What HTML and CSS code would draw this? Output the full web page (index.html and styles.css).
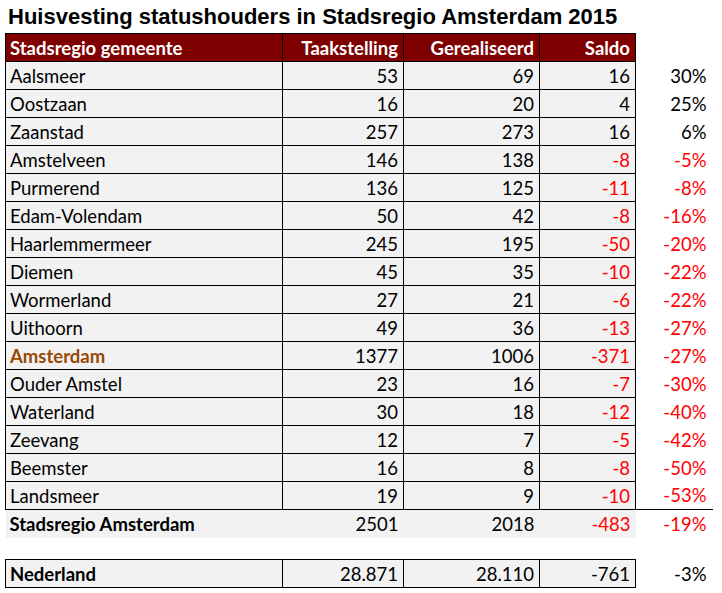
FILE: index.html
```html
<!DOCTYPE html>
<html>
<head>
<meta charset="utf-8">
<link rel="stylesheet" href="styles.css">
</head>
<body>
<h1 class="title">Huisvesting statushouders in Stadsregio Amsterdam 2015</h1>
<table class="data">
  <colgroup>
    <col class="c-name"><col class="c-taak"><col class="c-ger"><col class="c-saldo"><col class="c-pct">
  </colgroup>
  <thead>
    <tr class="head">
      <th class="name">Stadsregio gemeente</th>
      <th>Taakstelling</th>
      <th>Gerealiseerd</th>
      <th>Saldo</th>
      <th class="pct"></th>
    </tr>
  </thead>
  <tbody>
    <tr><td class="name">Aalsmeer</td><td>53</td><td>69</td><td>16</td><td class="pct">30%</td></tr>
    <tr><td class="name">Oostzaan</td><td>16</td><td>20</td><td>4</td><td class="pct">25%</td></tr>
    <tr><td class="name">Zaanstad</td><td>257</td><td>273</td><td>16</td><td class="pct">6%</td></tr>
    <tr><td class="name">Amstelveen</td><td>146</td><td>138</td><td class="neg">-8</td><td class="pct neg">-5%</td></tr>
    <tr><td class="name">Purmerend</td><td>136</td><td>125</td><td class="neg">-11</td><td class="pct neg">-8%</td></tr>
    <tr><td class="name">Edam-Volendam</td><td>50</td><td>42</td><td class="neg">-8</td><td class="pct neg">-16%</td></tr>
    <tr><td class="name">Haarlemmermeer</td><td>245</td><td>195</td><td class="neg">-50</td><td class="pct neg">-20%</td></tr>
    <tr><td class="name">Diemen</td><td>45</td><td>35</td><td class="neg">-10</td><td class="pct neg">-22%</td></tr>
    <tr><td class="name">Wormerland</td><td>27</td><td>21</td><td class="neg">-6</td><td class="pct neg">-22%</td></tr>
    <tr><td class="name">Uithoorn</td><td>49</td><td>36</td><td class="neg">-13</td><td class="pct neg">-27%</td></tr>
    <tr><td class="name ams">Amsterdam</td><td>1377</td><td>1006</td><td class="neg">-371</td><td class="pct neg">-27%</td></tr>
    <tr><td class="name">Ouder Amstel</td><td>23</td><td>16</td><td class="neg">-7</td><td class="pct neg">-30%</td></tr>
    <tr><td class="name">Waterland</td><td>30</td><td>18</td><td class="neg">-12</td><td class="pct neg">-40%</td></tr>
    <tr><td class="name">Zeevang</td><td>12</td><td>7</td><td class="neg">-5</td><td class="pct neg">-42%</td></tr>
    <tr><td class="name">Beemster</td><td>16</td><td>8</td><td class="neg">-8</td><td class="pct neg">-50%</td></tr>
    <tr><td class="name">Landsmeer</td><td>19</td><td>9</td><td class="neg">-10</td><td class="pct neg">-53%</td></tr>
    <tr class="total"><td class="name">Stadsregio Amsterdam</td><td>2501</td><td>2018</td><td class="neg">-483</td><td class="pct neg">-19%</td></tr>
    <tr class="gap"><td colspan="5"></td></tr>
    <tr class="nl"><td class="name">Nederland</td><td>28.871</td><td>28.110</td><td>-761</td><td class="pct">-3%</td></tr>
  </tbody>
</table>
</body>
</html>
```

FILE: styles.css
```css
html, body {
  margin: 0;
  padding: 0;
  background: #ffffff;
}
body {
  padding: 0 0 0 5px;
}
.title {
  font-family: "Liberation Sans", Arial, sans-serif;
  font-weight: bold;
  font-size: 22px;
  line-height: 24px;
  margin: 0;
  padding: 5px 0 4px 3px;
  color: #000;
}
.data {
  border-collapse: collapse;
  table-layout: fixed;
  width: 707px;
  font-family: Lato, "Open Sans", sans-serif;
  font-size: 18.5px;
  color: #000;
}
.c-name { width: 277px; }
.c-taak { width: 121px; }
.c-ger { width: 136px; }
.c-saldo { width: 96px; }
.c-pct { width: 77px; }
.data th, .data td {
  height: 28px;
  padding: 0 5px 0 4px;
  text-align: right;
  white-space: nowrap;
  border: 1px solid #000;
  background: #f2f2f2;
  box-sizing: border-box;
  line-height: 22px;
  vertical-align: middle;
}
.data th.name, .data td.name {
  text-align: left;
}
.data .head th {
  background: #7f0000;
  color: #ffffff;
  font-weight: bold;
}
.data td.pct, .data th.pct {
  background: #ffffff;
  border: none;
  padding-right: 6px;
}
.data .head th.pct {
  background: #ffffff;
}
.neg {
  color: #ff0000;
}
.ams {
  color: #984807;
  font-weight: bold;
}
.data .total td {
  border-left: none;
  border-right: none;
  border-bottom: none;
  border-top: 1px solid #000;
  font-weight: normal;
}
.data .total td.name {
  font-weight: bold;
}
.data .total td.pct {
  border-top: 1px solid #000;
}
.data .gap td {
  height: 22px;
  border: none;
  background: #ffffff;
}
.data .nl td.name {
  font-weight: bold;
}
```
